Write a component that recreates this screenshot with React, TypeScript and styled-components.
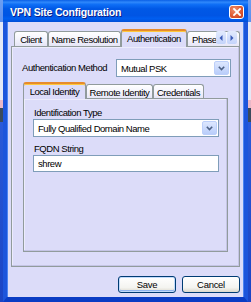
import React from 'react';
import styled, { createGlobalStyle } from 'styled-components';

const GlobalStyle = createGlobalStyle`
  html, body {
    margin: 0;
    padding: 0;
  }
  body {
    width: 251px;
    height: 302px;
    overflow: hidden;
    background: linear-gradient(
      #6c9ef2 0px,
      #5a8eee 22px,
      #e4e8f6 22px,
      #e4e8f6 100px,
      #e9b8c8 100px,
      #e9b8c8 108px,
      #3a4a5c 108px,
      #3a4a5c 122px,
      #2a5ad8 122px,
      #1a44c4 302px
    );
    font-family: "Liberation Sans", Arial, sans-serif;
  }
`;

const Desktop = styled.div`
  display: flex;
  padding-left: 3px;
  width: 251px;
  height: 302px;
  box-sizing: border-box;
`;

const Window = styled.div`
  width: 245px;
  height: 302px;
  display: flex;
  flex-direction: column;
`;

const TitleBar = styled.div`
  height: 22px;
  flex-shrink: 0;
  display: flex;
  align-items: center;
  justify-content: space-between;
  padding: 0 4px 0 7px;
  box-sizing: border-box;
  background: linear-gradient(
    #0a5fe6 0%,
    #2f88fb 10%,
    #0f6ff6 20%,
    #0058e6 40%,
    #0055e4 70%,
    #005ef0 85%,
    #004fd6 100%
  );
`;

const Title = styled.span`
  color: #fff;
  font-weight: bold;
  font-size: 10.5px;
  letter-spacing: -0.2px;
  text-shadow: 1px 1px 0 #0a1f88;
  padding-top: 1px;
`;

const CloseButton = styled.div`
  width: 15px;
  height: 14px;
  margin-top: 2px;
  box-sizing: border-box;
  border: 1px solid #fff;
  border-radius: 3px;
  background: radial-gradient(circle at 35% 30%, #ef8f6c 0%, #df5a32 55%, #c3381a 100%);
  display: flex;
  align-items: center;
  justify-content: center;
`;

const Frame = styled.div`
  flex: 1;
  display: flex;
  flex-direction: column;
  background: #dcdcf9;
  border-left: 4px solid #1c55dc;
  border-right: 4px solid #1c55dc;
  border-bottom: 5px solid #0a3cc4;
  padding: 7px 4px 4px 4px;
  box-shadow: inset 1px 0 0 #4c84f0, inset -1px 0 0 #4c84f0;
`;

const TabControl = styled.div<{ $mt?: number; $ml?: number; $mr?: number }>`
  flex: 1;
  display: flex;
  flex-direction: column;
  margin-top: ${(p) => p.$mt ?? 0}px;
  margin-left: ${(p) => p.$ml ?? 0}px;
  margin-right: ${(p) => p.$mr ?? 0}px;
`;

const TabStrip = styled.div<{ $h: number; $pad: number }>`
  position: relative;
  display: flex;
  align-items: flex-end;
  height: ${(p) => p.$h}px;
  padding-left: ${(p) => p.$pad}px;
  flex-shrink: 0;
  z-index: 1;
`;

const Tab = styled.div<{ $active?: boolean; $w: number; $h: number }>`
  box-sizing: border-box;
  flex-shrink: 0;
  width: ${(p) => p.$w}px;
  height: ${(p) => (p.$active ? p.$h + 1 : p.$h - 2)}px;
  margin-bottom: ${(p) => (p.$active ? -1 : 0)}px;
  border: 1px solid #919b9c;
  border-bottom: none;
  border-radius: 3px 3px 0 0;
  border-top: ${(p) => (p.$active ? '2px solid #e68b2c' : '1px solid #919b9c')};
  box-shadow: ${(p) => (p.$active ? 'inset 0 1px 0 #ffc83c' : 'none')};
  background: ${(p) => (p.$active ? '#dcdcf9' : 'linear-gradient(#ffffff, #f2f2fc 60%, #e6e6f6)')};
  font-size: 9.5px;
  letter-spacing: -0.45px;
  color: #000;
  white-space: nowrap;
  overflow: hidden;
  display: flex;
  align-items: center;
  justify-content: center;
  padding: ${(p) => (p.$active ? '0 0 1px 0' : '1px 0 0 0')};
`;

const ClippedTab = styled(Tab)`
  justify-content: flex-start;
  padding-left: 4px;
`;

const Scroller = styled.div`
  position: absolute;
  right: 3px;
  top: 2px;
  display: flex;
  gap: 1px;
`;

const ScrollButton = styled.div`
  width: 10px;
  height: 13px;
  box-sizing: border-box;
  border-radius: 2px;
  background: linear-gradient(#e2eafd, #c4d4fa);
  display: flex;
  align-items: center;
  justify-content: center;
`;

const Panel = styled.div<{ $pad: string }>`
  flex: 1;
  display: flex;
  flex-direction: column;
  box-sizing: border-box;
  border: 1px solid #919b9c;
  background: #dcdcf9;
  padding: ${(p) => p.$pad};
  box-shadow: inset -1px -1px 0 #c4c4e4, inset 1px 1px 0 #ececfc;
`;

const FieldRow = styled.div`
  display: flex;
  align-items: center;
  height: 18px;
`;

const Label = styled.div<{ $mt?: number }>`
  font-size: 9.5px;
  letter-spacing: -0.45px;
  line-height: 12px;
  color: #000;
  margin-top: ${(p) => p.$mt ?? 0}px;
  padding-left: 1px;
`;

const RowLabel = styled(Label)`
  flex: 1;
  padding-left: 0;
`;

const Combo = styled.div<{ $w: number }>`
  box-sizing: border-box;
  width: ${(p) => p.$w}px;
  height: 18px;
  flex-shrink: 0;
  border: 1px solid #7f9db9;
  background: #fff;
  display: flex;
  align-items: center;
  padding: 1px;
`;

const ComboText = styled.span`
  flex: 1;
  padding-left: 3px;
  font-size: 9.5px;
  letter-spacing: -0.45px;
  color: #000;
  white-space: nowrap;
`;

const DropButton = styled.span`
  width: 15px;
  height: 100%;
  box-sizing: border-box;
  border: 1px solid #bccffa;
  border-radius: 2px;
  background: linear-gradient(#dde7fe, #b9cdfa);
  display: flex;
  align-items: center;
  justify-content: center;
`;

const TextInput = styled.div<{ $w: number }>`
  box-sizing: border-box;
  width: ${(p) => p.$w}px;
  height: 17px;
  border: 1px solid #7f9db9;
  background: #fff;
  padding-left: 4px;
  font-size: 9.5px;
  letter-spacing: -0.45px;
  display: flex;
  align-items: center;
`;

const ButtonRow = styled.div`
  display: flex;
  justify-content: flex-end;
  gap: 6px;
  margin-top: 9px;
`;

const Button = styled.div<{ $default?: boolean }>`
  width: 58px;
  height: 17px;
  box-sizing: border-box;
  border: 1px solid #003c74;
  border-radius: 3px;
  background: linear-gradient(#ffffff, #f4f4f0 70%, #dcd8cc);
  box-shadow: ${(p) => (p.$default ? 'inset 0 0 0 1px #c2dbfb, inset 0 -1px 0 1px #8fb4f0' : 'none')};
  font-size: 9.5px;
  letter-spacing: -0.3px;
  color: #000;
  display: flex;
  align-items: center;
  justify-content: center;
`;

const Chevron = () => (
  <svg width="7" height="5" viewBox="0 0 7 5">
    <path d="M0.8 0.8 L3.5 3.6 L6.2 0.8" fill="none" stroke="#4d6185" strokeWidth="1.6" />
  </svg>
);

const Arrow = ({ dir }: { dir: 'left' | 'right' }) => (
  <svg width="4" height="6" viewBox="0 0 4 6">
    <path d={dir === 'left' ? 'M3.5 0 L0.5 3 L3.5 6 Z' : 'M0.5 0 L3.5 3 L0.5 6 Z'} fill="#3a5bb8" />
  </svg>
);

const CloseX = () => (
  <svg width="8" height="8" viewBox="0 0 8 8">
    <path d="M1 1 L7 7 M7 1 L1 7" stroke="#fff" strokeWidth="1.8" strokeLinecap="square" />
  </svg>
);

const App = () => {
  return (
    <>
      <GlobalStyle />
      <Desktop>
        <Window>
          <TitleBar>
            <Title>VPN Site Configuration</Title>
            <CloseButton>
              <CloseX />
            </CloseButton>
          </TitleBar>
          <Frame>
            <TabControl>
              <TabStrip $h={17} $pad={3}>
                <Tab $w={34} $h={17}>Client</Tab>
                <Tab $w={73} $h={17}>Name Resolution</Tab>
                <Tab $w={66} $h={17} $active>
                  Authentication
                </Tab>
                <ClippedTab $w={53} $h={17}>
                  Phase 1
                </ClippedTab>
                <Scroller>
                  <ScrollButton>
                    <Arrow dir="left" />
                  </ScrollButton>
                  <ScrollButton>
                    <Arrow dir="right" />
                  </ScrollButton>
                </Scroller>
              </TabStrip>
              <Panel $pad="12px 8px 14px 10px">
                <FieldRow>
                  <RowLabel>Authentication Method</RowLabel>
                  <Combo $w={115}>
                    <ComboText>Mutual PSK</ComboText>
                    <DropButton>
                      <Chevron />
                    </DropButton>
                  </Combo>
                </FieldRow>
                <TabControl $mt={5} $ml={1} $mr={3}>
                  <TabStrip $h={16} $pad={0}>
                    <Tab $w={63} $h={16} $active>
                      Local Identity
                    </Tab>
                    <Tab $w={67} $h={16}>Remote Identity</Tab>
                    <Tab $w={51} $h={16}>Credentials</Tab>
                  </TabStrip>
                  <Panel $pad="8px 8px 0 9px">
                    <Label>Identification Type</Label>
                    <Combo $w={186}>
                      <ComboText>Fully Qualified Domain Name</ComboText>
                      <DropButton>
                        <Chevron />
                      </DropButton>
                    </Combo>
                    <Label $mt={6}>FQDN String</Label>
                    <TextInput $w={186}>shrew</TextInput>
                  </Panel>
                </TabControl>
              </Panel>
            </TabControl>
            <ButtonRow>
              <Button $default>Save</Button>
              <Button>Cancel</Button>
            </ButtonRow>
          </Frame>
        </Window>
      </Desktop>
    </>
  );
};

export default App;
